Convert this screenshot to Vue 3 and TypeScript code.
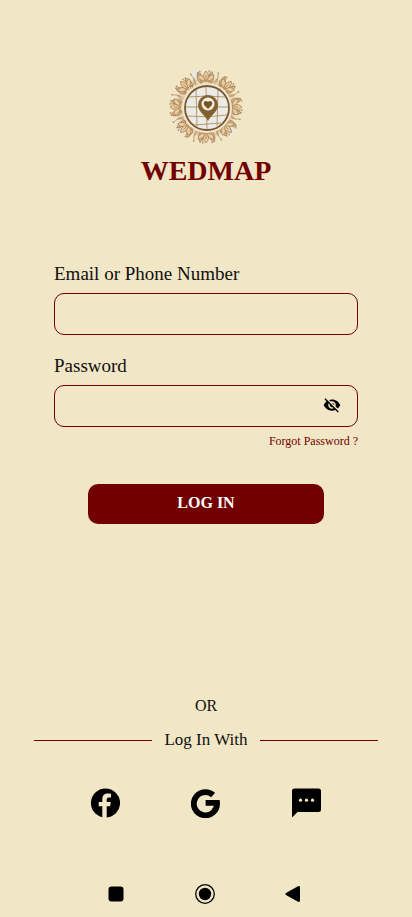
<script setup lang="ts">
import { ref } from 'vue'

const identity = ref('')
const password = ref('')
const visible = ref(false)

const spokes = (count: number, offset = 0): number[] =>
  Array.from({ length: count }, (_, i) => offset + (i * 360) / count)

const blooms = spokes(8)
const leaves = spokes(16, 11)
const sprigs = spokes(24, 5)
</script>

<template>
  <main class="screen">
    <header class="brand">
      <svg class="emblem" viewBox="-38 -38 76 76" aria-hidden="true">
        <circle r="30" fill="#e4d3b2" />
        <g fill="#e9e8e1">
          <circle cx="-10" cy="-32" r="5" />
          <circle cx="4" cy="-32" r="4" />
          <circle cx="24" cy="22" r="6" />
          <circle cx="-24" cy="20" r="6" />
        </g>
        <g v-for="a in sprigs" :key="'s' + a" :transform="`rotate(${a})`" fill="none" stroke="#b08d60" stroke-width=".7">
          <path d="M0-24Q3-29 0-35" />
          <circle cy="-36" r=".9" fill="#b5946a" stroke="none" />
        </g>
        <g v-for="a in leaves" :key="'l' + a" :transform="`rotate(${a})`">
          <path d="M0-24Q-5-29-1-36Q4-29 0-24Z" fill="#dcc39a" stroke="#a57d4f" stroke-width=".8" />
          <path d="M0-25L-1-33M2-25Q5-27 6-31" fill="none" stroke="#b08450" stroke-width=".7" />
        </g>
        <g v-for="a in blooms" :key="'b' + a" :transform="`rotate(${a})`" fill="#e6cda4" stroke="#ad7f4c" stroke-width=".8">
          <path d="M0-26Q-8-26-8-32Q-3-33 0-26Q3-33 8-32Q8-26 0-26Z" />
          <path d="M0-25Q-5-31 0-36Q5-31 0-25Z" />
          <path d="M0-26V-32" fill="none" />
        </g>
        <g transform="translate(1 1)">
          <circle r="25" fill="#f0e5cd" />
          <circle r="22" fill="#ebece7" stroke="#7b5831" stroke-width="1.8" />
          <g fill="none" stroke="#b08f60" stroke-width=".9">
            <path d="M-11-18L-10 18M-1-21L0 21M11-18L10 18" />
            <path d="M-18-11Q0-13 18-11M-21-1H21M-20 8Q0 10 20 7M-13 17L14 15" />
          </g>
          <path d="M1 13C-1 8-9 4-9-3A10 10 0 0 1 11-3C11 4 3 8 1 13Z" fill="#84602f" />
          <circle cx="1" cy="-4" r="6.5" fill="#f3efe1" />
          <path d="M1 1L-3-3Q-4-7-1-7Q0-7 1-6Q2-7 3-7Q6-7 5-3Z" fill="#795322" />
        </g>
      </svg>
      <h1>WEDMAP</h1>
    </header>

    <form class="form" @submit.prevent>
      <label for="identity">Email or Phone Number</label>
      <div class="field">
        <input id="identity" v-model="identity" type="text" autocomplete="username" />
      </div>
      <label for="password">Password</label>
      <div class="field">
        <input id="password" v-model="password" :type="visible ? 'text' : 'password'" autocomplete="current-password" />
        <button class="eye" type="button" aria-label="Show password" @click="visible = !visible">
          <svg viewBox="0 0 24 24" width="18" height="18" fill="currentColor">
            <path d="M12 7c2.76 0 5 2.24 5 5 0 .65-.13 1.26-.36 1.83l2.92 2.92c1.51-1.26 2.7-2.89 3.43-4.75-1.73-4.39-6-7.5-11-7.5-1.4 0-2.74.25-3.98.7l2.16 2.16C10.74 7.13 11.35 7 12 7zM2 4.27l2.28 2.28.46.46C3.08 8.3 1.78 10.02 1 12c1.73 4.39 6 7.5 11 7.5 1.55 0 3.03-.3 4.38-.84l.42.42L19.73 22 21 20.73 3.27 3 2 4.27zM7.53 9.8l1.55 1.55c-.05.21-.08.43-.08.65 0 1.66 1.34 3 3 3 .22 0 .44-.03.65-.08l1.55 1.55c-.67.33-1.41.53-2.2.53-2.76 0-5-2.24-5-5 0-.79.2-1.53.53-2.2zm4.31-.78l3.15 3.15.02-.16c0-1.66-1.34-3-3-3l-.17.01z" />
          </svg>
        </button>
      </div>
      <a class="forgot" href="#">Forgot Password ?</a>
      <button class="submit" type="submit">LOG IN</button>
    </form>

    <section class="alternatives">
      <p>OR</p>
      <div class="divider"><span>Log In With</span></div>
      <div class="providers">
        <button type="button" aria-label="Facebook">
          <svg viewBox="0 0 30 30" width="30" height="30">
            <circle cx="15.500" cy="15" r="14.600" fill="#000" />
            <path d="M12.3 30V18.2H8.7V14H12.3V11.2C12.3 7.5 14.4 5.6 17.8 5.6C19.2 5.6 20.6 5.8 21 5.9V9.5H19C17.2 9.5 16.7 10.5 16.7 11.8V14H20.8L20.1 18.2H16.7V30Z" fill="#f1e6c6" />
          </svg>
        </button>
        <button type="button" aria-label="Google">
          <svg viewBox="0 0 30 30" width="30" height="30">
            <path d="M22.100 7A11.600 11.600 0 1 0 26 14.800H14.600" fill="none" stroke="#000" stroke-width="5.800" />
          </svg>
        </button>
        <button type="button" aria-label="Text message">
          <svg viewBox="0 0 30 30" width="30" height="30">
            <path d="M2.500 .5H26.500Q29 .5 29 3V21.500Q29 24 26.500 24H5.500L0 29.500V3Q0 .5 2.500 .5Z" fill="#000" />
            <g fill="#f1e6c6"><circle cx="8.500" cy="12.200" r="1.600" /><circle cx="14.500" cy="12.200" r="1.600" /><circle cx="20.500" cy="12.200" r="1.600" /></g>
          </svg>
        </button>
      </div>
    </section>

    <nav class="system" aria-label="System navigation">
      <button type="button" aria-label="Recent apps">
        <svg viewBox="0 0 20 20" width="20" height="20"><rect x="2.500" y="2.500" width="15" height="15" rx="3" /></svg>
      </button>
      <button type="button" aria-label="Home">
        <svg viewBox="0 0 20 20" width="20" height="20"><circle cx="10" cy="10" r="9.300" fill="none" stroke="#000" stroke-width="1.300" /><circle cx="10" cy="10" r="6.200" /></svg>
      </button>
      <button type="button" aria-label="Back">
        <svg viewBox="0 0 20 20" width="20" height="20"><path d="M3 9Q1.500 10 3 11L15 17.700Q17 18.500 17 16.500V3.500Q17 1.500 15 2.300Z" /></svg>
      </button>
    </nav>
  </main>
</template>

<style>
body {
  background: #f1e6c6;
}
</style>

<style scoped>
* {
  box-sizing: border-box;
}

.screen {
  display: flex;
  flex-direction: column;
  min-height: 100vh;
  padding: 69px 0 13px;
  background: #f1e6c6;
  color: #101010;
  font-family: "Liberation Serif", serif;
}

button {
  display: flex;
  align-items: center;
  justify-content: center;
  padding: 0;
  border: 0;
  background: none;
  color: #000;
  font-family: inherit;
  cursor: pointer;
}

.brand {
  display: flex;
  flex-direction: column;
  align-items: center;
}

.emblem {
  width: 76px;
  height: 76px;
}

h1 {
  margin: 10px 0 0;
  color: #730000;
  font-size: 28px;
  font-weight: 700;
  line-height: 32px;
}

.form {
  display: flex;
  flex-direction: column;
  margin: 75px 54px 0;
}

label {
  margin-bottom: 7px;
  font-size: 19px;
  line-height: 24px;
}

.field {
  display: flex;
  align-items: center;
  height: 42px;
  margin-bottom: 19px;
  padding: 0 16px;
  border: 1px solid #730000;
  border-radius: 10px;
}

.field input {
  flex: 1;
  min-width: 0;
  height: 100%;
  padding: 0;
  border: 0;
  outline: 0;
  background: transparent;
  font: inherit;
}

.eye {
  padding-bottom: 2px;
}

.forgot {
  align-self: flex-end;
  margin-top: -12px;
  color: #730000;
  font-size: 12px;
  line-height: 14px;
  text-decoration: none;
}

.submit {
  height: 40px;
  margin: 36px 34px 0;
  padding-bottom: 2px;
  border-radius: 10px;
  background: #730000;
  color: #fff;
  font-size: 16px;
  font-weight: 700;
}

.alternatives {
  display: flex;
  flex-direction: column;
  margin-top: auto;
  font-size: 16px;
  line-height: 20px;
  text-align: center;
}

.alternatives p {
  margin: 0 0 14px;
}

.divider {
  display: flex;
  align-items: center;
  gap: 12px;
  margin: 0 34px;
  font-size: 17px;
}

.divider::before,
.divider::after {
  content: "";
  flex: 1;
  height: 1px;
  background: #730000;
}

.providers {
  display: flex;
  justify-content: space-between;
  margin: 38px 90px 0;
}

.system {
  display: flex;
  justify-content: space-between;
  margin: 66px 109px 0 106px;
}
</style>
